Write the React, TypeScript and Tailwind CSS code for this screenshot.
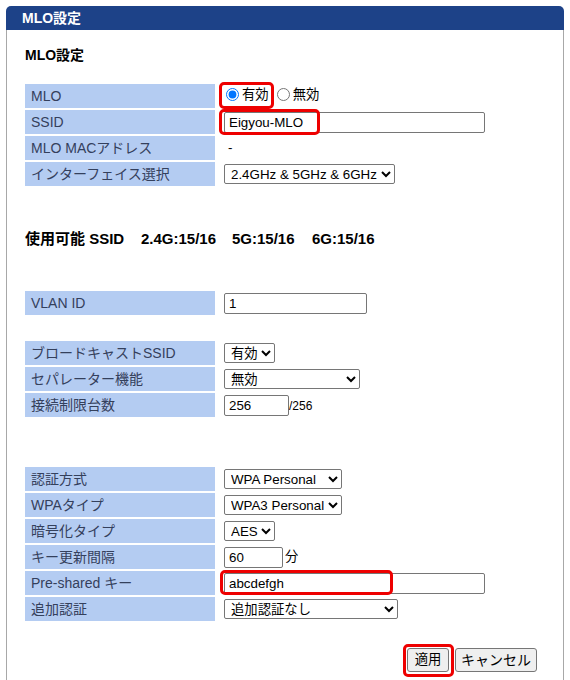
import React from "react";

const FONT = { fontFamily: '"Liberation Sans", Arial, "Noto Sans CJK JP", sans-serif' };

function Label({ children }: { children: React.ReactNode }) {
  return (
    <td className="w-[190px] h-[24px] bg-[#b4ccf2] pl-[6px] text-[14px] text-[#34405c] leading-[24px] whitespace-nowrap align-middle p-0">
      {children}
    </td>
  );
}

function Val({ children }: { children: React.ReactNode }) {
  return (
    <td className="h-[24px] pl-[7px] align-middle text-[13.33px] text-black whitespace-nowrap relative p-0">
      {children}
    </td>
  );
}

function RedBox({ className }: { className: string }) {
  return <span className={"absolute pointer-events-none border-[3px] border-[#ee0000] rounded-[5px] " + className} />;
}

const inputCls =
  "h-[21px] border border-[#767676] rounded-[2px] bg-white px-[4px] text-[13.33px] text-black align-middle outline-none";
const selectCls =
  "h-[20px] border border-[#767676] rounded-[2px] bg-white pl-[2px] text-[13.33px] text-black align-middle";

function Table({ children, className = "" }: { children: React.ReactNode; className?: string }) {
  return (
    <table className={"border-separate border-spacing-[2px] ml-[-2px] " + className}>
      <tbody>{children}</tbody>
    </table>
  );
}

export default function App() {
  return (
    <div className="w-[570px] h-[680px] overflow-hidden bg-white pt-[6px] pl-[6px]" style={FONT}>
      <div className="w-[558px]">
        <div className="h-[24px] bg-[#1d4288] rounded-t-[5px] pl-[16px] flex items-center">
          <span className="text-white font-bold text-[14px]">MLO設定</span>
        </div>
        <div className="border-l border-r border-[#a8a8a8] h-[700px] pl-[18px] pt-[15px]">
          <div className="h-[20px] leading-[20px] font-bold text-[14px] text-black">MLO設定</div>

          <Table className="mt-[17px]">
            <tr>
              <Label>MLO</Label>
              <Val>
                <span className="relative inline-flex items-center">
                  <RedBox className="left-[-5px] top-[-3px] w-[55px] h-[27px]" />
                  <input type="radio" name="mlo" defaultChecked className="w-[13px] h-[13px] m-0 ml-[2px] mr-[3px] accent-[#0075ff]" />
                  <span className="text-[13.33px]">有効</span>
                  <input type="radio" name="mlo" className="w-[13px] h-[13px] m-0 ml-[8px] mr-[3px]" />
                  <span className="text-[13.33px]">無効</span>
                </span>
              </Val>
            </tr>
            <tr>
              <Label>SSID</Label>
              <Val>
                <RedBox className="left-[2px] top-[-1px] w-[101px] h-[26px] z-10" />
                <input className={inputCls + " w-[261px]"} defaultValue="Eigyou-MLO" />
              </Val>
            </tr>
            <tr>
              <Label>MLO MACアドレス</Label>
              <Val>
                <span className="pl-[4px]">-</span>
              </Val>
            </tr>
            <tr>
              <Label>インターフェイス選択</Label>
              <Val>
                <select className={selectCls + " w-[171px]"} defaultValue="a">
                  <option value="a">2.4GHz &amp; 5GHz &amp; 6GHz</option>
                </select>
              </Val>
            </tr>
          </Table>

          <div className="mt-[41px] h-[20px] flex items-center font-bold text-black whitespace-nowrap text-[15px]">
            <span className="w-[116px]">使用可能 SSID</span>
            <span className="w-[91px]">2.4G:15/16</span>
            <span className="w-[80px]">5G:15/16</span>
            <span>6G:15/16</span>
          </div>

          <Table className="mt-[40px]">
            <tr>
              <Label>VLAN ID</Label>
              <Val>
                <input className={inputCls + " w-[143px]"} defaultValue="1" />
              </Val>
            </tr>
          </Table>

          <Table className="mt-[22px]">
            <tr>
              <Label>ブロードキャストSSID</Label>
              <Val>
                <select className={selectCls + " w-[51px]"} defaultValue="a">
                  <option value="a">有効</option>
                </select>
              </Val>
            </tr>
            <tr>
              <Label>セパレーター機能</Label>
              <Val>
                <select className={selectCls + " w-[136px]"} defaultValue="a">
                  <option value="a">無効</option>
                </select>
              </Val>
            </tr>
            <tr>
              <Label>接続制限台数</Label>
              <Val>
                <input className={inputCls + " w-[65px]"} defaultValue="256" />
                <span className="text-[12px] align-middle">/256</span>
              </Val>
            </tr>
          </Table>

          <Table className="mt-[46px]">
            <tr>
              <Label>認証方式</Label>
              <Val>
                <select className={selectCls + " w-[118px]"} defaultValue="a">
                  <option value="a">WPA Personal</option>
                </select>
              </Val>
            </tr>
            <tr>
              <Label>WPAタイプ</Label>
              <Val>
                <select className={selectCls + " w-[118px]"} defaultValue="a">
                  <option value="a">WPA3 Personal</option>
                </select>
              </Val>
            </tr>
            <tr>
              <Label>暗号化タイプ</Label>
              <Val>
                <select className={selectCls + " w-[51px]"} defaultValue="a">
                  <option value="a">AES</option>
                </select>
              </Val>
            </tr>
            <tr>
              <Label>キー更新間隔</Label>
              <Val>
                <input className={inputCls + " w-[59px]"} defaultValue="60" />
                <span className="text-[13.33px] align-middle ml-[2px]">分</span>
              </Val>
            </tr>
            <tr>
              <Label>Pre-shared キー</Label>
              <Val>
                <RedBox className="left-[3px] top-[-1px] w-[173px] h-[25px] z-10" />
                <input className={inputCls + " w-[261px]"} defaultValue="abcdefgh" />
              </Val>
            </tr>
            <tr>
              <Label>追加認証</Label>
              <Val>
                <select className={selectCls + " w-[174px]"} defaultValue="a">
                  <option value="a">追加認証なし</option>
                </select>
              </Val>
            </tr>
          </Table>

          <div className="mt-[25px] flex justify-end pr-[26px] gap-[6px]">
            <span className="relative inline-flex">
              <RedBox className="left-[-4px] top-[-4px] w-[51px] h-[33px]" />
              <button className="h-[24px] w-[42px] border border-[#767676] rounded-[3px] bg-[#efefef] text-[13.33px] text-black">
                適用
              </button>
            </span>
            <button className="h-[24px] w-[82px] border border-[#767676] rounded-[3px] bg-[#efefef] text-[14px] text-black">
              キャンセル
            </button>
          </div>
        </div>
      </div>
    </div>
  );
}
